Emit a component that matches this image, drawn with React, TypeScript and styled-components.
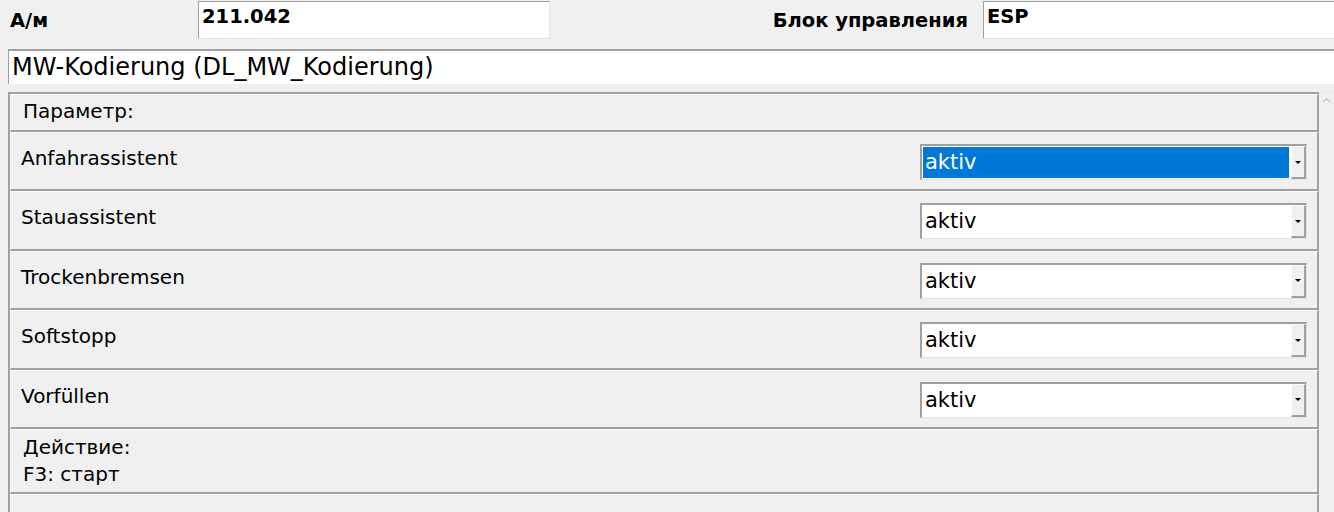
import styled, { createGlobalStyle } from 'styled-components';

const Global = createGlobalStyle`
    html, body {
        margin: 0;
        padding: 0;
        background: #f0f0f0;
        overflow: hidden;
    }
    body {
        font-family: "DejaVu Sans", "Noto Sans", sans-serif;
        color: #000;
    }
`

// Style

const Page = styled.div`
    width: 1334px;
    height: 512px;
    display: flex;
    flex-direction: column;
    overflow: hidden;
`

const TopBar = styled.div`
    height: 49px;
    display: flex;
    align-items: flex-start;
    padding-top: 1px;
    box-sizing: border-box;
    overflow: hidden;
`

const Label = styled.div<{ $width: number; $right?: boolean }>`
    font-weight: bold;
    font-size: 19.5px;
    width: ${p => p.$width}px;
    flex-shrink: 0;
    text-align: ${p => p.$right ? 'right' : 'left'};
    padding: 8px ${p => p.$right ? '15px' : '0'} 0 ${p => p.$right ? '0' : '10px'};
    box-sizing: border-box;
`

const Field = styled.div<{ $width: number }>`
    width: ${p => p.$width}px;
    height: 38px;
    box-sizing: border-box;
    background: #fff;
    border-top: 1px solid #a0a0a0;
    border-left: 1px solid #a0a0a0;
    border-right: 1px solid #e3e3e3;
    border-bottom: 1px solid #e3e3e3;
    font-weight: bold;
    font-size: 19.5px;
    padding: 3px 0 0 3px;
    flex-shrink: 0;
`

const Title = styled.div`
    margin-left: 8px;
    height: 35px;
    box-sizing: border-box;
    background: #fff;
    border-top: 2px solid #a0a0a0;
    border-left: 1px solid #a0a0a0;
    font-size: 24px;
    line-height: 30px;
    padding: 1px 0 0 3px;
    white-space: nowrap;
`

const Body = styled.div`
    flex: 1;
    display: flex;
    margin-top: 8px;
    margin-left: 8px;
    min-height: 0;
`

const Panel = styled.div`
    width: 1311px;
    border-top: 2px solid #a0a0a0;
    border-left: 2px solid #a0a0a0;
    box-sizing: border-box;
    display: flex;
    flex-direction: column;
`

const Section = styled.div<{ $height: number }>`
    height: ${p => p.$height}px;
    flex-shrink: 0;
    box-sizing: border-box;
    border-bottom: 2px solid #a0a0a0;
    border-right: 2px solid #a0a0a0;
    border-top: 1px solid #fcfcfc;
    border-left: 1px solid #fcfcfc;
    font-size: 20px;
    padding-left: 13px;
`

const Header = styled(Section)`
    padding-top: 4px;
    padding-left: 12px;
`

const Row = styled(Section)`
    display: flex;
    justify-content: space-between;
    padding-left: 10px;
    padding-right: 10px;
`

const RowLabel = styled.div`
    padding-top: 13px;
`

const Select = styled.div`
    margin-top: 11px;
    width: 387px;
    height: 36px;
    box-sizing: border-box;
    display: flex;
    background: #fff;
    border-top: 2px solid #a0a0a0;
    border-left: 2px solid #a0a0a0;
    border-right: 1px solid #e3e3e3;
    border-bottom: 1px solid #e3e3e3;
`

const SelectValue = styled.div<{ $active?: boolean }>`
    flex: 1;
    background: ${p => p.$active ? '#0078d7' : '#fff'};
    color: ${p => p.$active ? '#fff' : '#000'};
    margin: 1px 2px 1px 1px;
    padding: 3px 0 0 2px;
    font-size: 21px;
    box-sizing: border-box;
`

const Arrow = styled.div`
    width: 15px;
    background: #f0f0f0;
    border-right: 2px solid #a0a0a0;
    border-bottom: 2px solid #a0a0a0;
    border-top: 1px solid #fcfcfc;
    border-left: 1px solid #fcfcfc;
    box-sizing: border-box;
    display: flex;
    align-items: center;
    justify-content: center;
    &::after {
        content: '';
        border-left: 3px solid transparent;
        border-right: 3px solid transparent;
        border-top: 3px solid #000;
    }
`

const Action = styled(Section)`
    padding-top: 4px;
    padding-left: 12px;
    line-height: 27px;
`

const Rest = styled.div`
    flex: 1;
    border-right: 2px solid #a0a0a0;
    border-top: 1px solid #fcfcfc;
    border-left: 1px solid #fcfcfc;
`

const Scrollbar = styled.div`
    flex: 1;
    background: #f0f0f0;
    border-top: 1px solid #e8e8e8;
    display: flex;
    justify-content: center;
    padding-top: 4px;
`

// Component

const params = ['Anfahrassistent', 'Stauassistent', 'Trockenbremsen', 'Softstopp', 'Vorfüllen']

const App = () => {
    return (
        <Page>
            <Global />
            <TopBar>
                <Label $width={198}>А/м</Label>
                <Field $width={352}>211.042</Field>
                <Label $width={433} $right>Блок управления</Label>
                <Field $width={360}>ESP</Field>
            </TopBar>
            <Title>MW-Kodierung (DL_MW_Kodierung)</Title>
            <Body>
                <Panel>
                    <Header $height={38}>Параметр:</Header>
                    {params.map((p, i) => (
                        <Row key={p} $height={59.4}>
                            <RowLabel>{p}</RowLabel>
                            <Select>
                                <SelectValue $active={i === 0}>aktiv</SelectValue>
                                <Arrow />
                            </Select>
                        </Row>
                    ))}
                    <Action $height={65}>
                        Действие:<br />F3: старт
                    </Action>
                    <Rest />
                </Panel>
                <Scrollbar>
                    <svg width="9" height="6" viewBox="0 0 9 6">
                        <path d="M1 5 L4.5 1.5 L8 5" fill="none" stroke="#c0c0c0" strokeWidth="1.2" />
                    </svg>
                </Scrollbar>
            </Body>
        </Page>
    )
}
export default App;
